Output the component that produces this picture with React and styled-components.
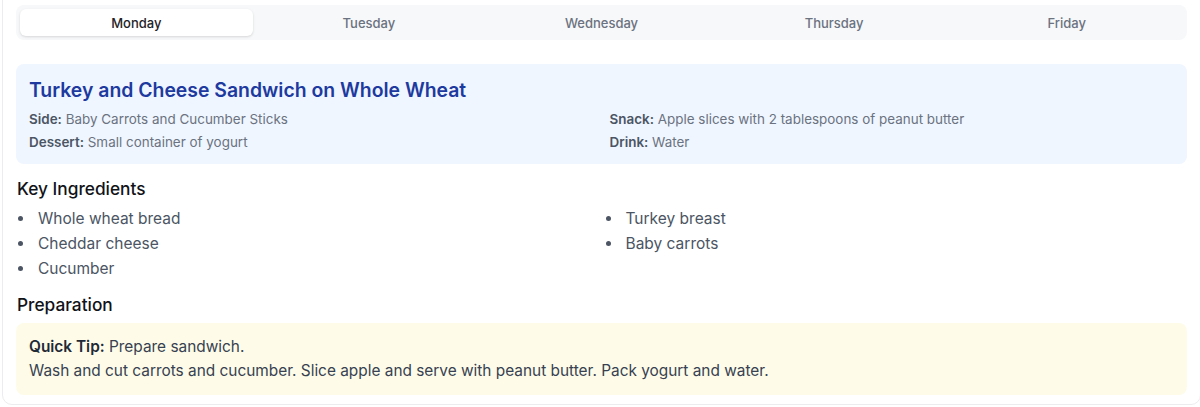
import React, { useState } from "react";
import styled, { createGlobalStyle } from "styled-components";

const Global = createGlobalStyle`
  html, body { margin: 0; padding: 0; background: #ffffff; overflow: hidden; }
  body { font-family: Inter, "Noto Sans", "Liberation Sans", sans-serif; -webkit-font-smoothing: antialiased; }
  * { box-sizing: border-box; }
`;

const Card = styled.div`
  width: 1199px;
  margin: -10px 0 0 2px;
  padding: 14px 13px 9px 13px;
  border: 1px solid #ececee;
  border-radius: 10px;
  background: #fff;
`;

const TabList = styled.div`
  display: grid;
  grid-template-columns: repeat(5, 1fr);
  padding: 4px;
  background: #f7f8fa;
  border-radius: 8px;
`;

const Tab = styled.button`
  height: 27px;
  border: none;
  border-radius: 6px;
  font-family: inherit;
  font-size: 13px;
  font-weight: 500;
  cursor: pointer;
  background: ${(p) => (p.$active ? "#ffffff" : "transparent")};
  color: ${(p) => (p.$active ? "#1f2328" : "#6b7280")};
  box-shadow: ${(p) => (p.$active ? "0 1px 3px rgba(0,0,0,0.10), 0 1px 2px rgba(0,0,0,0.04)" : "none")};
`;

const MealBox = styled.section`
  margin-top: 24px;
  padding: 12px 13px 12px;
  background: #eff6ff;
  border-radius: 8px;
`;

const Title = styled.h2`
  margin: 0 0 5px;
  font-size: 19.4px;
  line-height: 28px;
  font-weight: 600;
  color: #1e3a9f;
`;

const DetailGrid = styled.div`
  display: grid;
  grid-template-columns: 1fr 1fr;
  column-gap: 16px;
  row-gap: 3px;
`;

const Detail = styled.div`
  font-size: 13.45px;
  line-height: 20px;
  color: #6b7280;
  b { font-weight: 600; color: #4b5563; }
`;

const Heading = styled.h3`
  margin: ${(p) => p.$mt || "12px"} 0 ${(p) => p.$mb || "6px"};
  font-size: 17.3px;
  line-height: 24px;
  font-weight: 500;
  color: #111318;
  padding-left: 1px;
`;

const IngredientList = styled.ul`
  list-style: none;
  margin: 0;
  padding: 0;
  display: grid;
  grid-template-columns: 1fr 1fr;
  grid-auto-flow: column;
  grid-template-rows: repeat(3, 25px);
  column-gap: 4px;
`;

const Item = styled.li`
  display: flex;
  align-items: center;
  font-size: 15.5px;
  line-height: 25px;
  color: #4b5563;
  &::before {
    content: "";
    width: 5px;
    height: 5px;
    border-radius: 50%;
    background: #4b5563;
    margin: 0 15px 0 2px;
    flex: none;
  }
`;

const TipBox = styled.section`
  margin-top: 3px;
  padding: 12px 13px 12px;
  background: #fefce8;
  border-radius: 8px;
`;

const TipLine = styled.p`
  margin: 0;
  font-size: 15.4px;
  line-height: 24px;
  color: #374151;
  b { font-weight: 600; color: #1f2937; }
`;

const days = ["Monday", "Tuesday", "Wednesday", "Thursday", "Friday"];

export default function App() {
  const [day, setDay] = useState("Monday");
  return (
    <>
      <Global />
      <Card>
        <TabList>
          {days.map((d) => (
            <Tab key={d} $active={d === day} onClick={() => setDay(d)}>
              {d}
            </Tab>
          ))}
        </TabList>
        <MealBox>
          <Title>Turkey and Cheese Sandwich on Whole Wheat</Title>
          <DetailGrid>
            <Detail><b>Side:</b> Baby Carrots and Cucumber Sticks</Detail>
            <Detail><b>Snack:</b> Apple slices with 2 tablespoons of peanut butter</Detail>
            <Detail><b>Dessert:</b> Small container of yogurt</Detail>
            <Detail><b>Drink:</b> Water</Detail>
          </DetailGrid>
        </MealBox>
        <Heading $mt="13px" $mb="5px">Key Ingredients</Heading>
        <IngredientList>
          <Item>Whole wheat bread</Item>
          <Item>Cheddar cheese</Item>
          <Item>Cucumber</Item>
          <Item>Turkey breast</Item>
          <Item>Baby carrots</Item>
        </IngredientList>
        <Heading $mt="12px">Preparation</Heading>
        <TipBox>
          <TipLine><b>Quick Tip:</b> Prepare sandwich.</TipLine>
          <TipLine>Wash and cut carrots and cucumber. Slice apple and serve with peanut butter. Pack yogurt and water.</TipLine>
        </TipBox>
      </Card>
    </>
  );
}
